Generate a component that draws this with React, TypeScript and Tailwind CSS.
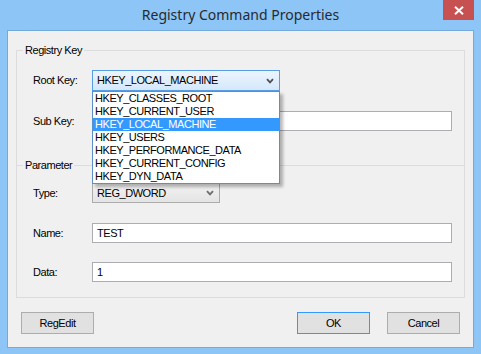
import React from "react";

function Chevron({ color }: { color: string }) {
  return (
    <svg width="8" height="6" viewBox="0 0 8 6">
      <path d="M1 1.2 L4 4.4 L7 1.2" stroke={color} strokeWidth="1.8" fill="none" />
    </svg>
  );
}

const items = [
  "HKEY_CLASSES_ROOT",
  "HKEY_CURRENT_USER",
  "HKEY_LOCAL_MACHINE",
  "HKEY_USERS",
  "HKEY_PERFORMANCE_DATA",
  "HKEY_CURRENT_CONFIG",
  "HKEY_DYN_DATA",
];

function TextBox({ value }: { value: string }) {
  return (
    <div className="w-[360px] h-[20px] border border-[#abadb3] bg-white flex items-center px-[4px] leading-[18px]">
      {value}
    </div>
  );
}

export default function App() {
  return (
    <div className="w-[481px] h-[354px] bg-[#8dc5f6] flex flex-col font-['Liberation_Sans',Arial,sans-serif] text-[11px] tracking-[-0.45px] text-black">
      {/* Title bar */}
      <div className="relative h-[30px] flex items-center justify-center">
        <span className="font-['Noto_Sans','Open_Sans',sans-serif] text-[14px] tracking-normal text-[#262a30] pb-[1px]">
          Registry Command Properties
        </span>
        <div className="absolute top-0 right-[7px] w-[31px] h-[20px] bg-[#c75050] flex items-center justify-center">
          <svg width="10" height="9" viewBox="0 0 10 9">
            <path d="M1 0.8 L9 8.2 M9 0.8 L1 8.2" stroke="white" strokeWidth="2" />
          </svg>
        </div>
      </div>

      {/* Client */}
      <div className="mx-[7px] h-[318px] border border-[#74a9dc] bg-[#f0f0f0] flex flex-col pt-[12px]">
        <fieldset className="mx-[8px] border border-[#dcdcdc] pb-[15px]">
          <legend className="ml-[6px] px-[2px] leading-[14px]">Registry Key</legend>

          {/* Root Key */}
          <div className="mt-[13px] pl-[16px] flex items-center h-[21px]">
            <div className="w-[59px] shrink-0">Root Key:</div>
            <div className="relative w-[188px] h-[21px]">
              <div className="w-full h-full border border-[#569de5] bg-gradient-to-b from-[#edf5fd] to-[#d4e8fb] flex items-center justify-between pl-[4px] pr-[5px]">
                <span>HKEY_LOCAL_MACHINE</span>
                <Chevron color="#505050" />
              </div>
              <div className="absolute left-0 top-[21px] w-[188px] z-10 bg-white border border-[#5a8fc8] shadow-[3px_3px_3px_rgba(0,0,0,0.28)]">
                {items.map((it) => (
                  <div
                    key={it}
                    className={
                      it === "HKEY_LOCAL_MACHINE"
                        ? "h-[13px] leading-[13px] pl-[2px] bg-[#3399ff] text-white"
                        : "h-[13px] leading-[13px] pl-[2px]"
                    }
                  >
                    {it}
                  </div>
                ))}
              </div>
            </div>
          </div>

          {/* Sub Key */}
          <div className="mt-[20px] pl-[16px] flex items-center h-[20px]">
            <div className="w-[59px] shrink-0">Sub Key:</div>
            <TextBox value="" />
          </div>

          {/* Parameter */}
          <fieldset className="mt-[27px] border-t border-[#dcdcdc]">
            <legend className="ml-[6px] px-[2px] leading-[14px]">Parameter</legend>

            <div className="mt-[11px] pl-[16px] flex items-center h-[20px]">
              <div className="w-[59px] shrink-0">Type:</div>
              <div className="w-[128px] h-[20px] border border-[#acacac] bg-gradient-to-b from-[#f2f2f2] to-[#e4e4e4] flex items-center justify-between pl-[4px] pr-[5px]">
                <span>REG_DWORD</span>
                <Chevron color="#6d6d6d" />
              </div>
            </div>

            <div className="mt-[20px] pl-[16px] flex items-center h-[20px]">
              <div className="w-[59px] shrink-0">Name:</div>
              <TextBox value="TEST" />
            </div>

            <div className="mt-[19px] pl-[16px] flex items-center h-[20px]">
              <div className="w-[59px] shrink-0">Data:</div>
              <TextBox value="1" />
            </div>
          </fieldset>
        </fieldset>

        {/* Buttons */}
        <div className="mt-[14px] px-[13px] flex items-center justify-between">
          <div className="w-[73px] h-[22px] border border-[#adadad] bg-[#e1e1e1] flex items-center justify-center">
            RegEdit
          </div>
          <div className="flex gap-[17px]">
            <div className="w-[73px] h-[22px] border border-[#3399ff] bg-[#e1e1e1] flex items-center justify-center">
              OK
            </div>
            <div className="w-[73px] h-[22px] border border-[#adadad] bg-[#e1e1e1] flex items-center justify-center">
              Cancel
            </div>
          </div>
        </div>
      </div>
    </div>
  );
}
